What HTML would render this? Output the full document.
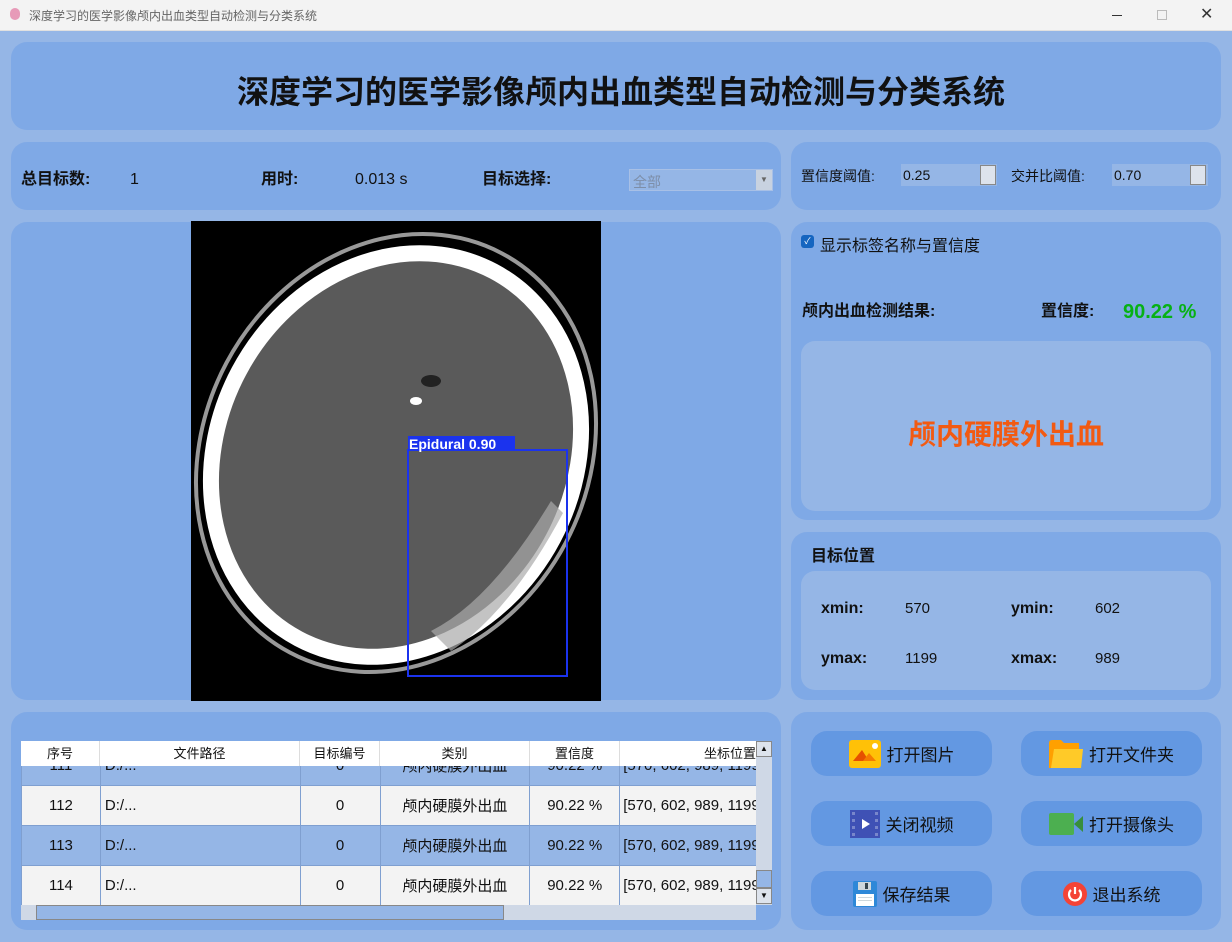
<!DOCTYPE html>
<html><head><meta charset="utf-8"><style>
*{margin:0;padding:0;box-sizing:border-box}
body{width:1232px;height:942px;background:#95b6e6;font-family:"Liberation Sans","Noto Sans CJK SC",sans-serif;position:relative;overflow:hidden;color:#111}
.a{position:absolute}
.p{position:absolute;background:#7fa9e6;border-radius:16px}
.tb{left:0;top:0;width:1232px;height:31px;background:#f3f3f3;border-bottom:1px solid #e0e0e0}
.b{font-weight:bold}
.l{line-height:20px}
.btn{position:absolute;width:181px;height:45px;background:#6398e2;border-radius:16px;font-size:17px;display:flex;align-items:center;justify-content:center;gap:6px}
table{border-collapse:collapse;font-size:15px}
td{border:1px solid #7f9fd0;text-align:center;height:40px}
</style></head><body>
<div class="a tb"></div>
<div class="a" style="left:10px;top:8px;width:10px;height:12px;background:#e79ab8;border-radius:5px"></div>
<div class="a" style="left:29px;top:7px;font-size:12px;color:#666">深度学习的医学影像颅内出血类型自动检测与分类系统</div>
<div class="a" style="left:1112px;top:15px;width:10px;height:1px;background:#333"></div>
<div class="a" style="left:1157px;top:10px;width:10px;height:10px;border:1px solid #bbb"></div>
<div class="a" style="left:1200px;top:4px;font-size:16px;color:#333">✕</div>

<div class="p" style="left:11px;top:42px;width:1210px;height:88px"></div>
<div class="a b" style="left:0;width:1242px;top:67px;text-align:center;font-size:32px">深度学习的医学影像颅内出血类型自动检测与分类系统</div>

<div class="p" style="left:11px;top:142px;width:770px;height:68px"></div>
<div class="a b l" style="left:21px;top:170px;font-size:16px">总目标数:</div>
<div class="a l" style="left:130px;top:170px;font-size:16px">1</div>
<div class="a b l" style="left:261px;top:170px;font-size:16px">用时:</div>
<div class="a l" style="left:355px;top:170px;font-size:16px">0.013 s</div>
<div class="a b l" style="left:482px;top:170px;font-size:16px">目标选择:</div>
<div class="a" style="left:629px;top:169px;width:144px;height:22px;background:#95b6e6;border:1px solid #a8c0e6;color:#7d8ea8;font-size:14px;padding:2px 3px">全部</div>
<div class="a" style="left:756px;top:170px;width:16px;height:20px;background:#c8d2e0;font-size:8px;text-align:center;line-height:20px;color:#666">▼</div>

<div class="p" style="left:791px;top:142px;width:430px;height:68px"></div>
<div class="a l" style="left:801px;top:166px;font-size:14px">置信度阈值:</div>
<div class="a" style="left:901px;top:164px;width:96px;height:22px;background:#95b6e6;font-size:14px;padding:3px 2px">0.25</div>
<div class="a" style="left:980px;top:165px;width:16px;height:20px;background:#dde3ec;border:1px solid #888"></div>
<div class="a l" style="left:1011px;top:166px;font-size:14px">交并比阈值:</div>
<div class="a" style="left:1112px;top:164px;width:96px;height:22px;background:#95b6e6;font-size:14px;padding:3px 2px">0.70</div>
<div class="a" style="left:1190px;top:165px;width:16px;height:20px;background:#dde3ec;border:1px solid #888"></div>

<div class="p" style="left:11px;top:222px;width:770px;height:478px"></div>
<svg class="a" style="left:191px;top:221px" width="410" height="480" viewBox="0 0 410 480">
<rect width="410" height="480" fill="#000"/>
<ellipse cx="205" cy="232" rx="192" ry="226" transform="rotate(28 205 232)" fill="none" stroke="#999" stroke-width="4"/>
<ellipse cx="205" cy="234" rx="178" ry="208" transform="rotate(28 205 234)" fill="#5a5a5a" stroke="#fff" stroke-width="16"/>
<path d="M240 410 Q300 380 360 280 L372 292 Q320 390 260 430Z" fill="#aaa" opacity="0.7"/>
<ellipse cx="225" cy="180" rx="6" ry="4" fill="#fff"/>
<ellipse cx="240" cy="160" rx="10" ry="6" fill="#222"/>
<rect x="217" y="229" width="159" height="226" fill="none" stroke="#1b33ee" stroke-width="2"/>
<rect x="217" y="215" width="107" height="15" fill="#1b33ee"/>
<text x="218" y="228" fill="#fff" font-size="14" font-weight="bold" font-family="Liberation Sans,sans-serif">Epidural  0.90</text>
</svg>

<div class="p" style="left:791px;top:222px;width:430px;height:298px"></div>
<div class="a" style="left:801px;top:235px;width:13px;height:13px;background:#1565c0;border-radius:3px;color:#fff;font-size:9px;text-align:center;line-height:13px">✓</div>
<div class="a" style="left:820px;top:232px;font-size:16px">显示标签名称与置信度</div>
<div class="a b l" style="left:802px;top:302px;font-size:16px">颅内出血检测结果:</div>
<div class="a b l" style="left:1041px;top:302px;font-size:16px">置信度:</div>
<div class="a b" style="left:1123px;top:300px;font-size:20px;line-height:24px;color:#07b115">90.22 %</div>
<div class="a" style="left:801px;top:341px;width:410px;height:170px;background:#95b6e6;border-radius:14px"></div>
<div class="a b" style="left:801px;width:410px;top:413px;text-align:center;font-size:28px;color:#f25a12">颅内硬膜外出血</div>

<div class="p" style="left:791px;top:532px;width:430px;height:168px"></div>
<div class="a b" style="left:811px;top:542px;font-size:16px">目标位置</div>
<div class="a" style="left:801px;top:571px;width:410px;height:119px;background:#95b6e6;border-radius:14px"></div>
<div class="a b" style="left:821px;top:600px;font-size:16px">xmin:</div>
<div class="a" style="left:905px;top:600px;font-size:15px">570</div>
<div class="a b" style="left:1011px;top:600px;font-size:16px">ymin:</div>
<div class="a" style="left:1095px;top:600px;font-size:15px">602</div>
<div class="a b" style="left:821px;top:650px;font-size:16px">ymax:</div>
<div class="a" style="left:905px;top:650px;font-size:15px">1199</div>
<div class="a b" style="left:1011px;top:650px;font-size:16px">xmax:</div>
<div class="a" style="left:1095px;top:650px;font-size:15px">989</div>

<div class="p" style="left:11px;top:712px;width:770px;height:218px"></div>
<div class="a" style="left:21px;top:741px;width:735px;height:164px;overflow:hidden;background:#f3f3f3">
<table style="position:absolute;top:4px;left:0;width:800px">
<colgroup><col style="width:79px"><col style="width:200px"><col style="width:80px"><col style="width:150px"><col style="width:90px"><col style="width:201px"></colgroup>
<tr style="background:#95b6e6"><td>111</td><td style="text-align:left;padding-left:4px">D:/...</td><td>0</td><td>颅内硬膜外出血</td><td>90.22 %</td><td style="text-align:left;padding-left:3px">[570, 602, 989, 1199]</td></tr>
<tr><td>112</td><td style="text-align:left;padding-left:4px">D:/...</td><td>0</td><td>颅内硬膜外出血</td><td>90.22 %</td><td style="text-align:left;padding-left:3px">[570, 602, 989, 1199]</td></tr>
<tr style="background:#95b6e6"><td>113</td><td style="text-align:left;padding-left:4px">D:/...</td><td>0</td><td>颅内硬膜外出血</td><td>90.22 %</td><td style="text-align:left;padding-left:3px">[570, 602, 989, 1199]</td></tr>
<tr><td>114</td><td style="text-align:left;padding-left:4px">D:/...</td><td>0</td><td>颅内硬膜外出血</td><td>90.22 %</td><td style="text-align:left;padding-left:3px">[570, 602, 989, 1199]</td></tr>
</table>
<div style="position:absolute;top:0;left:0;width:735px;height:25px;background:#fff;font-size:13px;display:flex">
<div style="width:79px;text-align:center;line-height:25px;border-right:1px solid #ddd">序号</div><div style="width:200px;text-align:center;line-height:25px;border-right:1px solid #ddd">文件路径</div><div style="width:80px;text-align:center;line-height:25px;border-right:1px solid #ddd">目标编号</div><div style="width:150px;text-align:center;line-height:25px;border-right:1px solid #ddd">类别</div><div style="width:90px;text-align:center;line-height:25px;border-right:1px solid #ddd">置信度</div><div style="width:136px;text-align:right;line-height:25px">坐标位置</div></div>
</div>
<div class="a" style="left:756px;top:741px;width:16px;height:164px;background:#cfd8e6"></div>
<div class="a" style="left:756px;top:741px;width:16px;height:16px;background:#dde3ec;border:1px solid #888;font-size:8px;text-align:center;line-height:14px">▲</div>
<div class="a" style="left:756px;top:870px;width:16px;height:18px;background:#95b6e6;border:1px solid #888"></div>
<div class="a" style="left:756px;top:888px;width:16px;height:16px;background:#dde3ec;border:1px solid #888;font-size:8px;text-align:center;line-height:14px">▼</div>
<div class="a" style="left:21px;top:905px;width:735px;height:15px;background:#cfd8e6"></div>
<div class="a" style="left:36px;top:905px;width:468px;height:15px;background:#95b6e6;border:1px solid #888"></div>

<div class="p" style="left:791px;top:712px;width:430px;height:218px"></div>
<div class="btn" style="left:811px;top:731px"><svg width="32" height="28"><rect width="32" height="28" rx="3" fill="#ffc107"/><path d="M4 21 L13 10 L20 21Z" fill="#e65100"/><path d="M14 21 L20 13 L27 21Z" fill="#f57c00"/><circle cx="26" cy="6" r="3" fill="#fff"/></svg>打开图片</div>
<div class="btn" style="left:1021px;top:731px"><svg width="34" height="28"><path d="M0 3 Q0 0 3 0 L12 0 L15 3 L30 3 L30 28 L0 28Z" fill="#ffa000"/><path d="M5 9 L34 9 L32 28 L2 28Z" fill="#ffca28"/></svg>打开文件夹</div>
<div class="btn" style="left:811px;top:801px"><svg width="30" height="28"><rect width="30" height="28" fill="#3f51b5"/><g fill="#7986cb"><rect x="2" y="2" width="3" height="3"/><rect x="2" y="9" width="3" height="3"/><rect x="2" y="16" width="3" height="3"/><rect x="2" y="23" width="3" height="3"/><rect x="25" y="2" width="3" height="3"/><rect x="25" y="9" width="3" height="3"/><rect x="25" y="16" width="3" height="3"/><rect x="25" y="23" width="3" height="3"/></g><path d="M12 9 L20 14 L12 19Z" fill="#fff"/></svg>关闭视频</div>
<div class="btn" style="left:1021px;top:801px"><svg width="34" height="22"><rect width="25" height="22" rx="2" fill="#4caf50"/><path d="M25 11 L34 3 L34 19Z" fill="#388e3c"/></svg>打开摄像头</div>
<div class="btn" style="left:811px;top:871px"><svg width="24" height="26"><rect width="24" height="26" rx="2" fill="#2e88d8"/><rect x="5" y="1" width="13" height="8" fill="#cfd8dc"/><rect x="12" y="2" width="3" height="6" fill="#37474f"/><rect x="3" y="13" width="18" height="12" fill="#fff"/><g fill="#cfd8dc"><rect x="5" y="16" width="14" height="1"/><rect x="5" y="19" width="14" height="1"/></g></svg>保存结果</div>
<div class="btn" style="left:1021px;top:871px"><svg width="24" height="24"><circle cx="12" cy="12" r="12" fill="#f44336"/><path d="M8 8 A6 6 0 1 0 16 8" fill="none" stroke="#fff" stroke-width="2.2"/><path d="M12 5 L12 12" stroke="#fff" stroke-width="2.2"/></svg>退出系统</div>
</body></html>
